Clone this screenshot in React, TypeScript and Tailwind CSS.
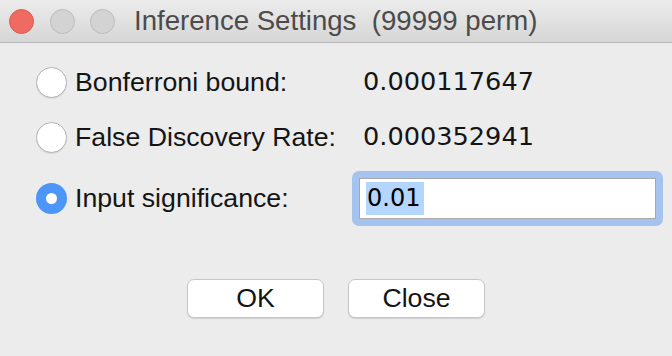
export default function App() {
  return (
    <div className="h-[356px] w-[672px] overflow-hidden bg-[#ececec] font-['Liberation_Sans',Arial,sans-serif] text-[#141414]">
      {/* title bar */}
      <div className="flex h-[43px] items-center border-b border-[#b9b9b9] bg-gradient-to-b from-[#ececec] to-[#d6d6d6] pl-[9px]">
        <div className="h-[25px] w-[25px] rounded-full border border-[#dd5a50] bg-[#ef6b61]" />
        <div className="ml-[16px] h-[25px] w-[25px] rounded-full border border-[#bdbdbd] bg-[#d3d3d3]" />
        <div className="ml-[15px] h-[25px] w-[25px] rounded-full border border-[#bdbdbd] bg-[#d3d3d3]" />
        <div className="ml-[19px] whitespace-pre text-[27.6px] leading-none text-[#4b4b4b]">
          Inference Settings  (99999 perm)
        </div>
      </div>

      <div className="flex flex-col pl-[36px]">
        {/* row 1 */}
        <div className="mt-[19px] flex h-[40px] items-center">
          <div className="flex w-[327px] items-center">
            <Radio />
            <span className="ml-[8px] text-[26.7px] leading-none">Bonferroni bound:</span>
          </div>
          <span className="font-['DejaVu_Sans',sans-serif] text-[25.6px] leading-none">0.000117647</span>
        </div>

        {/* row 2 */}
        <div className="mt-[15px] flex h-[40px] items-center">
          <div className="flex w-[327px] items-center">
            <Radio />
            <span className="ml-[8px] text-[26.7px] leading-none">False Discovery Rate:</span>
          </div>
          <span className="font-['DejaVu_Sans',sans-serif] text-[25.6px] leading-none">0.000352941</span>
        </div>

        {/* row 3 */}
        <div className="mt-[13px] flex h-[56px] items-center">
          <div className="flex w-[316px] items-center">
            <Radio checked />
            <span className="ml-[8px] text-[26.7px] leading-none">Input significance:</span>
          </div>
          <div className="h-[55px] w-[311px] rounded-[7px] bg-[#a4c3ee] p-[7px]">
            <div className="flex h-[41px] items-center border border-[#a8a8a8] bg-white pl-[6px]">
              <span className="flex h-[33px] items-center bg-[#b4d5fe] px-[1px] pr-[4px] font-['DejaVu_Sans',sans-serif] text-[24px] leading-none text-black">
                0.01
              </span>
            </div>
          </div>
        </div>
      </div>

      {/* buttons */}
      <div className="mt-[53px] flex justify-center gap-[24px]">
        <button className="flex h-[39px] w-[137px] items-center justify-center rounded-[7px] border border-[#c6c6c6] bg-white text-[26.7px] leading-none text-[#141414] shadow-[0_1px_1px_rgba(0,0,0,0.12)]">
          OK
        </button>
        <button className="flex h-[39px] w-[137px] items-center justify-center rounded-[7px] border border-[#c6c6c6] bg-white text-[26.7px] leading-none text-[#141414] shadow-[0_1px_1px_rgba(0,0,0,0.12)]">
          Close
        </button>
      </div>
    </div>
  );
}

function Radio({ checked = false }: { checked?: boolean }) {
  if (checked) {
    return (
      <div className="flex h-[31px] w-[31px] shrink-0 items-center justify-center rounded-full bg-[#4d95f6]">
        <div className="h-[11px] w-[11px] rounded-full bg-white" />
      </div>
    );
  }
  return (
    <div className="h-[31px] w-[31px] shrink-0 rounded-full border border-[#b3b3b3] bg-white shadow-[0_1px_1px_rgba(0,0,0,0.08)]" />
  );
}
